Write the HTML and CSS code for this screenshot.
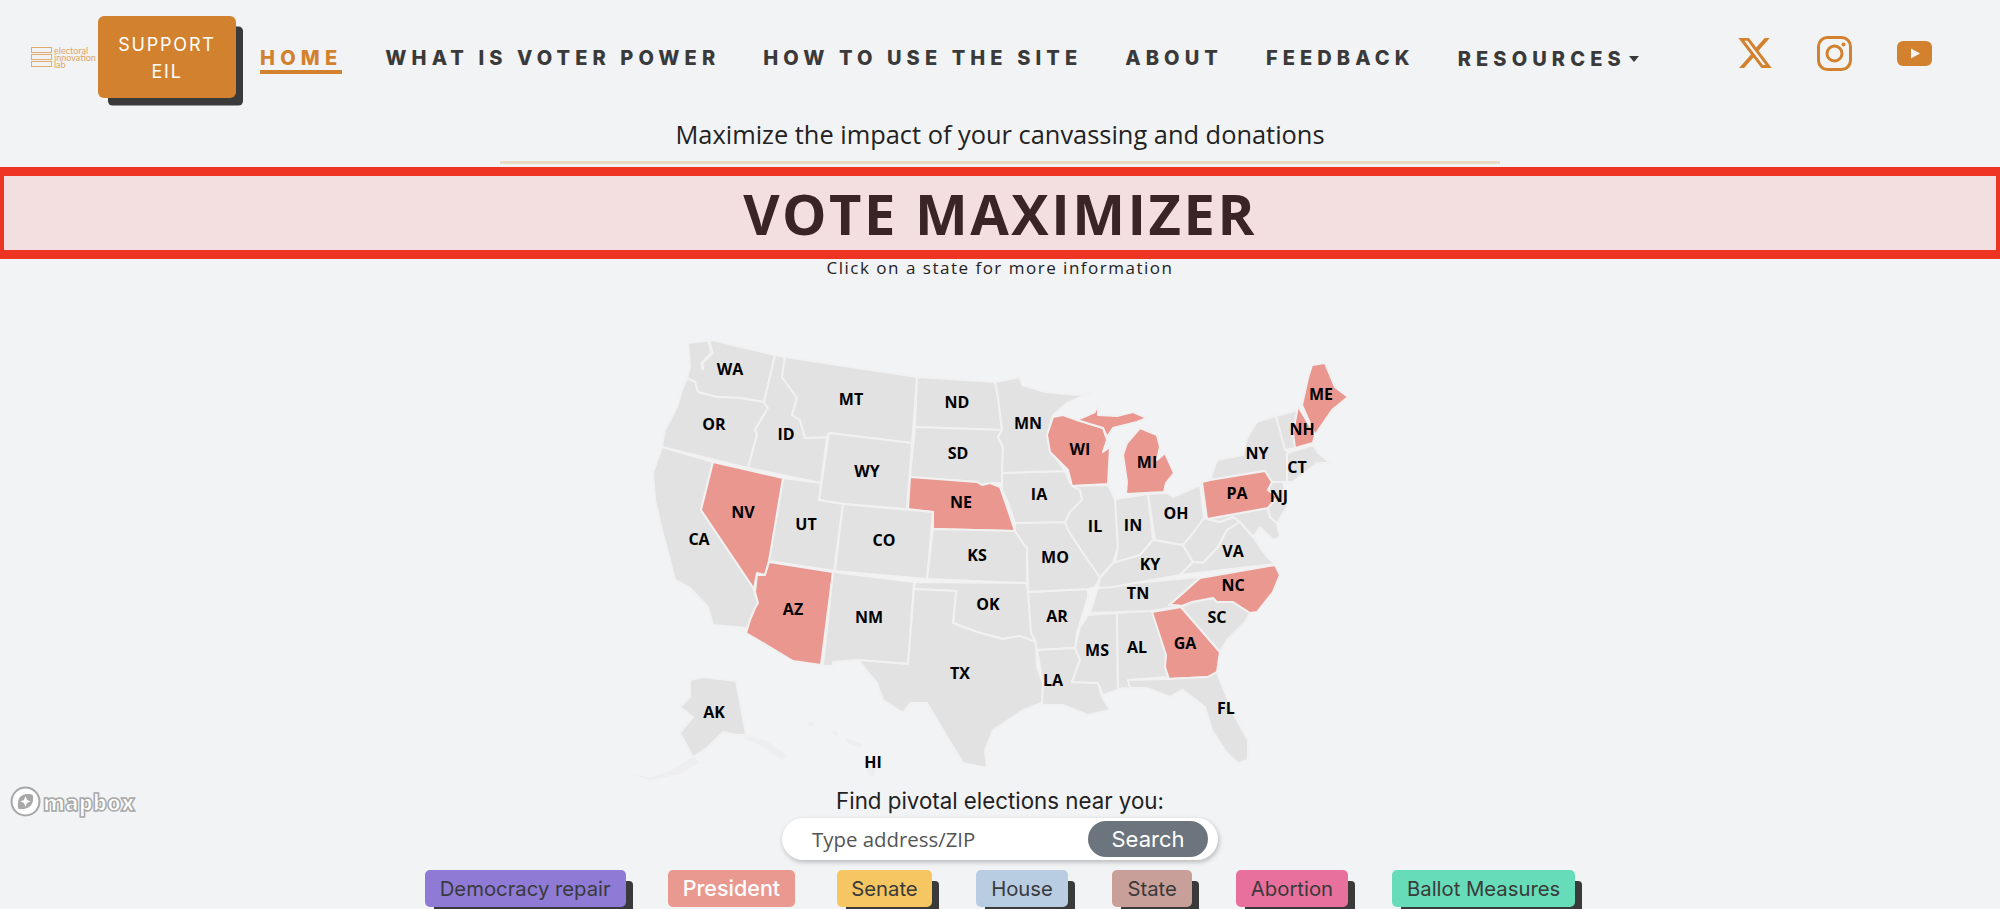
FILE: index.html
```html
<!DOCTYPE html>
<html lang="en">
  <head>
    <meta charset="UTF-8" />
    <meta name="viewport" content="width=device-width, initial-scale=1.0" />
    <title>Vote Maximizer</title>
    <link rel="stylesheet" href="styles.css">
  </head>
  <body>
    <header class="topbar">
      <a class="logo" href="#">
        <svg class="logo-bars" viewBox="0 0 21 20">
          <rect x="0.5" y="0.5" width="20" height="5" />
          <rect x="0.5" y="7.5" width="20" height="5" />
          <rect x="0.5" y="14.5" width="20" height="5" />
        </svg>
        <span class="logo-text">electoral<br>innovation<br>lab</span>
      </a>
      <a class="support" href="#">SUPPORT<br>EIL</a>
      <nav class="mainnav">
        <a class="active" href="#">HOME</a>
        <a href="#">WHAT IS VOTER POWER</a>
        <a href="#">HOW TO USE THE SITE</a>
        <a href="#">ABOUT</a>
        <a href="#">FEEDBACK</a>
        <a class="dropdown" href="#">RESOURCES<span class="caret"></span></a>
      </nav>
      <div class="social">
        <svg class="icon-x" viewBox="1 2 22 20"><path d="M18.244 2.25h3.308l-7.227 8.26 8.502 11.24H16.17l-5.214-6.817L4.99 21.75H1.68l7.73-8.835L1.254 2.25H8.08l4.713 6.231zm-1.161 17.52h1.833L7.084 4.126H5.117z" /></svg>
        <svg class="icon-ig" viewBox="0 0 35 35">
          <rect x="1.5" y="1.5" width="32" height="32" rx="9" />
          <circle cx="17.5" cy="17.5" r="7.5" />
          <circle class="dot" cx="26.5" cy="8.5" r="2" />
        </svg>
        <svg class="icon-yt" viewBox="0 0 35 25">
          <rect width="35" height="25" rx="6" />
          <path d="M14 7.5l9 5-9 5z" />
        </svg>
      </div>
    </header>

    <p class="tagline">Maximize the impact of your canvassing and donations</p>
    <hr class="rule">
    <h1 class="banner">VOTE MAXIMIZER</h1>
    <p class="hint">Click on a state for more information</p>

    <main class="mapwrap">
      <svg class="usmap" viewBox="600 320 800 465">
        <g class="faint">
          <polygon points="693,757 672,770 650,778 625,772 650,780 680,774 700,762" />
          <polygon points="746,735 765,740 787,755 782,760 760,745 742,738" />
          <polygon points="808,722 814,721 815,726 809,726" />
          <polygon points="832,731 838,733 836,737" />
          <polygon points="845,737 862,744 860,748 848,743" />
          <polygon points="866,768 876,766 874,776 868,775" />
        </g>
        <polygon class="st" points="688,343 712,340 775,355 764,402 740,398 717,397 698,392 695,382 687,378 690,367" />
        <polygon class="st" points="687,378 695,382 698,392 717,397 740,398 764,402 768,408 755,430 757,435 748,468 662,447 665,430 677,407 683,387" />
        <polygon class="st" points="775,355 785,357 782,377 797,398 792,415 800,420 805,438 827,437 821,483 748,468 757,435 755,430 768,408 764,402" />
        <polygon class="st" points="785,357 917,377 912,443 829,433 827,437 805,438 800,420 792,415 797,398 782,377" />
        <polygon class="st" points="829,433 912,443 907,509 843,504 819,500" />
        <polygon class="st" points="917,377 995,382 998,397 1002,430 915,427" />
        <polygon class="st" points="915,427 1002,430 998,437 1003,447 1002,483 990,483 982,485 977,482 910,477" />
        <polygon class="st hot" points="910,477 977,482 982,485 990,483 1000,487 1007,507 1015,531 933,529 933,512 908,509" />
        <polygon class="st" points="783,478 821,483 819,500 843,504 834,571 769,561" />
        <polygon class="st" points="843,504 933,512 927,579 835,571" />
        <polygon class="st" points="933,529 1015,531 1023,543 1027,548 1027,583 927,579" />
        <polygon class="st" points="662,447 713,462 701,510 754,589 755,595 759,605 747,628 713,625 708,607 690,588 675,580 670,560 662,530 655,500 653,473" />
        <polygon class="st hot" points="713,462 783,478 769,561 765,575 757,573 754,589 701,510" />
        <polygon class="st hot" points="769,562 833,572 821,665 793,661 746,633 750,620 755,608 758,603 755,592 757,575 765,575" />
        <polygon class="st" points="833,572 914,582 908,664 858,660 833,662 833,666 823,666" />
        <polygon class="st" points="915,582 1026,583 1030,592 1031,633 1036,642 1020,636 1003,639 977,632 953,623 956,591 914,589" />
        <polygon class="st" points="914,589 956,591 953,623 977,632 1003,639 1020,636 1036,642 1037,667 1043,683 1042,703 1023,710 993,730 985,750 987,768 963,763 943,730 927,703 910,703 903,713 883,700 877,683 858,660 908,664" />
        <polygon class="st" points="1028,592 1088,589 1088,597 1077,633 1075,648 1037,650 1035,640 1031,633" />
        <polygon class="st" points="1037,650 1075,648 1080,660 1072,682 1098,683 1102,697 1110,710 1088,715 1063,705 1042,705 1043,683" />
        <polygon class="st" points="1088,615 1117,613 1118,690 1103,695 1098,683 1072,682 1080,660 1075,648 1080,627" />
        <polygon class="st" points="1117,613 1152,610 1167,657 1165,667 1168,677 1128,680 1132,689 1123,688 1118,690" />
        <polygon class="st hot" points="1152,612 1181,607 1220,652 1217,672 1208,677 1169,679 1165,667 1166,655" />
        <polygon class="st" points="1181,607 1192,602 1213,598 1217,602 1233,602 1250,613 1245,622 1227,640 1220,652" />
        <polygon class="st" points="1128,680 1168,679 1208,677 1217,672 1218,675 1233,713 1248,740 1248,760 1238,763 1227,753 1212,730 1205,707 1183,690 1170,697 1147,688 1130,688" />
        <polygon class="st hot" points="1275,565 1280,575 1273,592 1257,612 1250,613 1233,602 1217,602 1213,598 1192,602 1182,606 1169,605 1183,593 1200,578" />
        <polygon class="st" points="1098,587 1113,585 1200,577 1183,593 1169,605 1182,606 1152,611 1090,613 1095,597" />
        <polygon class="st" points="1015,523 1065,522 1068,530 1083,553 1097,573 1100,578 1095,587 1088,589 1028,592 1027,548 1023,543 1015,531" />
        <polygon class="st" points="1002,473 1065,471 1070,483 1080,490 1082,500 1070,512 1065,522 1015,523 1007,500 1002,490" />
        <polygon class="st" points="995,382 1020,377 1022,385 1045,392 1080,395 1093,392 1067,403 1053,415 1047,435 1050,450 1065,471 1002,473 1003,447 998,437 1002,430 998,397" />
        <polygon class="st hot" points="1053,417 1063,415 1077,420 1103,428 1107,440 1103,452 1110,447 1108,484 1072,486 1068,470 1050,452 1047,435" />
        <polygon class="st hot" points="1077,420 1095,412 1098,403 1098,415 1117,416 1133,412 1147,418 1137,422 1113,428 1107,437 1103,428" />
        <polygon class="st hot" points="1140,428 1157,435 1160,447 1157,460 1165,453 1174,473 1166,483 1164,492 1126,494 1127,482 1123,455 1127,443" />
        <polygon class="st" points="1072,486 1108,485 1115,499 1118,547 1113,563 1100,577 1097,573 1083,553 1068,530 1065,522 1070,512 1082,500 1080,490" />
        <polygon class="st" points="1115,499 1148,494 1153,540 1140,555 1115,563 1118,547" />
        <polygon class="st" points="1148,494 1167,493 1173,497 1200,485 1204,518 1190,537 1183,545 1170,543 1155,540" />
        <polygon class="st" points="1153,540 1170,543 1183,545 1193,562 1180,575 1113,587 1098,588 1100,578 1113,563 1140,555" />
        <polygon class="st" points="1204,518 1220,522 1233,517 1240,522 1227,530 1218,547 1203,563 1193,562 1183,545 1190,537" />
        <polygon class="st" points="1193,562 1203,563 1218,547 1227,530 1240,522 1253,537 1267,557 1275,564 1180,575" />
        <polygon class="st" points="1207,519 1268,508 1270,517 1277,523 1280,537 1273,540 1260,527 1253,537 1240,522 1233,517 1220,522" />
        <polygon class="st" points="1272,482 1283,480 1287,507 1277,523 1270,517 1268,508 1277,497 1268,490" />
        <polygon class="st" points="1210,480 1217,460 1243,455 1247,438 1257,422 1276,416 1287,450 1287,482 1272,482 1265,471" />
        <polygon class="st hot" points="1202,482 1210,480 1265,471 1272,482 1268,490 1277,497 1268,508 1207,519" />
        <polygon class="st" points="1276,416 1298,410 1295,448 1285,450" />
        <polygon class="st hot" points="1298,406 1315,435 1313,443 1295,448 1293,433" />
        <polygon class="st hot" points="1312,365 1325,363 1335,387 1348,397 1332,410 1315,435 1302,405 1308,378" />
        <polygon class="st" points="1287,453 1313,445 1318,453 1330,463 1317,463 1293,482 1287,482" />
        <polygon class="st" points="690,680 703,677 736,681 746,735 737,735 723,732 708,747 693,757 680,733 693,717 680,707 690,697" />
        <polyline class="sound" points="708,338 712,353 702,363 703,370" />

        <text x="730" y="369">WA</text>
        <text x="714" y="424">OR</text>
        <text x="786" y="434">ID</text>
        <text x="851" y="399">MT</text>
        <text x="957" y="402">ND</text>
        <text x="1028" y="423">MN</text>
        <text x="958" y="453">SD</text>
        <text x="867" y="471">WY</text>
        <text x="743" y="512">NV</text>
        <text x="806" y="524">UT</text>
        <text x="884" y="540">CO</text>
        <text x="961" y="502">NE</text>
        <text x="977" y="555">KS</text>
        <text x="699" y="539">CA</text>
        <text x="793" y="609">AZ</text>
        <text x="869" y="617">NM</text>
        <text x="988" y="604">OK</text>
        <text x="960" y="673">TX</text>
        <text x="1057" y="616">AR</text>
        <text x="1053" y="680">LA</text>
        <text x="1097" y="650">MS</text>
        <text x="1137" y="647">AL</text>
        <text x="1185" y="643">GA</text>
        <text x="1217" y="617">SC</text>
        <text x="1226" y="708">FL</text>
        <text x="1233" y="585">NC</text>
        <text x="1138" y="593">TN</text>
        <text x="1150" y="564">KY</text>
        <text x="1233" y="551">VA</text>
        <text x="1176" y="513">OH</text>
        <text x="1133" y="525">IN</text>
        <text x="1095" y="526">IL</text>
        <text x="1055" y="557">MO</text>
        <text x="1039" y="494">IA</text>
        <text x="1080" y="449">WI</text>
        <text x="1147" y="462">MI</text>
        <text x="1237" y="493">PA</text>
        <text x="1279" y="496">NJ</text>
        <text x="1257" y="453">NY</text>
        <text x="1297" y="467">CT</text>
        <text x="1302" y="429">NH</text>
        <text x="1321" y="394">ME</text>
        <text x="714" y="712">AK</text>
        <text x="873" y="762">HI</text>
      </svg>

      <div class="mapbox">
        <svg class="mapbox-mark" viewBox="0 0 30 30">
          <circle cx="15" cy="15" r="13.5" />
          <path d="M8 22c-1-6 0-11 4-13 4-2 9-1 10 0 1 4 0 8-2 10-3 3-8 4-12 3z" />
          <path class="spark" d="M15 10l1.5 3.500 3.500 1.500-3.500 1.500-1.500 3.500-1.500-3.500-3.500-1.500 3.500-1.500z" />
        </svg>
        <span class="mapbox-name">mapbox</span>
      </div>
    </main>

    <p class="find">Find pivotal elections near you:</p>
    <form class="searchbar">
      <span class="placeholder">Type address/ZIP</span>
      <button class="searchbtn" type="button">Search</button>
    </form>

    <div class="legend">
      <span class="pill repair">Democracy repair</span>
      <span class="pill president">President</span>
      <span class="pill senate">Senate</span>
      <span class="pill house">House</span>
      <span class="pill state">State</span>
      <span class="pill abortion">Abortion</span>
      <span class="pill ballot">Ballot Measures</span>
    </div>
  </body>
</html>
```

FILE: styles.css
```css
html,
body {
  height: 909px;
  overflow: hidden;
}

body {
  margin: 0;
  background-color: #f2f3f5;
  color: #222;
  font-family: "Inter", sans-serif;
}

a {
  color: inherit;
  text-decoration: none;
}

p,
h1 {
  margin: 0;
}

/* top bar */
.topbar {
  display: flex;
  align-items: center;
  height: 114px;
  padding-left: 31px;
  box-sizing: border-box;
}

.logo {
  display: flex;
  align-items: center;
  gap: 2px;
  width: 67px;
}

.logo-bars {
  width: 21px;
  height: 20px;
  flex: none;
}

.logo-bars rect {
  fill: none;
  stroke: #e3aa6e;
}

.logo-text {
  color: #e0a566;
  font-family: "Lato", sans-serif;
  font-size: 9px;
  line-height: 7px;
}

.support {
  width: 138px;
  height: 82px;
  padding-top: 2px;
  box-sizing: border-box;
  display: flex;
  align-items: center;
  justify-content: center;
  text-align: center;
  background-color: #d2822e;
  border-radius: 6px;
  box-shadow: 8.5px 9px 0 -1.5px #3a3a3a;
  color: #fff;
  font-size: 18px;
  line-height: 27px;
  letter-spacing: 1.8px;
}

.mainnav {
  display: flex;
  align-items: flex-start;
  gap: 43px;
  margin-left: 24px;
  margin-top: 5px;
  color: #3a3a3a;
  font-family: "Inter", sans-serif;
  font-size: 20px;
  font-weight: 800;
  line-height: 24px;
  letter-spacing: 5.1px;
}

.active {
  color: #d2822e;
  border-bottom: 4px solid #d2822e;
  letter-spacing: 5.2px;
}

.dropdown {
  display: flex;
  align-items: center;
  margin-top: 1px;
}

.caret {
  margin-left: 3px;
  border-top: 6px solid #3a3a3a;
  border-left: 5px solid transparent;
  border-right: 5px solid transparent;
}

.social {
  display: flex;
  align-items: center;
  gap: 45px;
  margin-left: 99px;
  margin-top: -8px;
}

.icon-x {
  width: 34px;
  height: 32px;
  fill: #d2822e;
}

.icon-ig {
  width: 35px;
  height: 35px;
  fill: none;
  stroke: #d2822e;
  stroke-width: 3;
}

.icon-ig .dot {
  fill: #d2822e;
  stroke: none;
}

.icon-yt {
  width: 35px;
  height: 25px;
  fill: #d2822e;
}

.icon-yt path {
  fill: #f2f3f5;
}

/* headings */
.tagline {
  text-align: center;
  color: #222;
  font-family: "Open Sans", sans-serif;
  font-size: 25.4px;
  line-height: 40px;
}

.rule {
  width: 1000px;
  height: 3px;
  margin: 7px auto 3px;
  border: 0;
  background-color: #e8d9c5;
}

.banner {
  height: 92px;
  box-sizing: border-box;
  border: solid #ee3524;
  border-width: 9px 4px;
  background-color: #f3dfe0;
  color: #3a2426;
  text-align: center;
  font-family: "Open Sans", sans-serif;
  font-size: 56px;
  font-weight: 700;
  line-height: 74px;
  letter-spacing: 2.5px;
}

.hint {
  text-align: center;
  color: #222;
  font-family: "Open Sans", sans-serif;
  font-size: 17px;
  line-height: 18px;
  letter-spacing: 1.5px;
}

/* map */
.mapwrap {
  position: relative;
  padding-top: 43px;
  height: 465px;
}

.usmap {
  display: block;
  width: 800px;
  height: 465px;
  margin: 0 auto;
}

.st {
  fill: #e2e2e2;
  stroke: #f1f1f2;
  stroke-width: 2;
  stroke-linejoin: round;
}

.hot {
  fill: #ea9790;
}

.sound {
  fill: none;
  stroke: #f1f1f2;
  stroke-width: 3;
}

.faint polygon {
  fill: #eeeeef;
}

.usmap text {
  fill: #000;
  font-family: "Open Sans", sans-serif;
  font-size: 16px;
  font-weight: 700;
  text-anchor: middle;
  dominant-baseline: central;
}

.mapbox {
  position: absolute;
  left: 10px;
  top: 509px;
  display: flex;
  align-items: center;
  gap: 2px;
}

.mapbox-mark {
  width: 31px;
  height: 31px;
  fill: #fff;
  stroke: #a8a8a8;
  stroke-width: 2;
}

.mapbox-mark path {
  fill: #a8a8a8;
  stroke: none;
}

.mapbox-mark .spark {
  fill: #fff;
}

.mapbox-name {
  color: #fff;
  font-family: "Open Sans", sans-serif;
  font-size: 22px;
  font-weight: 800;
  line-height: 28px;
  -webkit-text-stroke: 1.5px #a8a8a8;
}

/* search */
.find {
  margin-top: 3px;
  text-align: center;
  color: #222;
  font-size: 22.3px;
  line-height: 26px;
}

.searchbar {
  display: flex;
  align-items: center;
  justify-content: space-between;
  width: 436px;
  height: 42px;
  margin: 4px auto 0;
  padding: 0 10px 0 30px;
  box-sizing: border-box;
  background-color: #fff;
  border-radius: 21px;
  box-shadow: 1px 2px 5px rgba(0, 0, 0, 0.25);
}

.placeholder {
  color: #555;
  font-family: "Open Sans", sans-serif;
  font-size: 20.4px;
}

.searchbtn {
  width: 120px;
  height: 36px;
  padding: 0;
  border: 0;
  border-radius: 18px;
  background-color: #6c757d;
  color: #fff;
  font-family: "Inter", sans-serif;
  font-size: 22px;
}

/* legend */
.legend {
  display: flex;
  justify-content: center;
  gap: 44px;
  margin-top: 10px;
}

.pill {
  height: 37px;
  padding: 0 15px;
  border-radius: 5px;
  box-shadow: 8px 10px 0 -1px #3a3a3a;
  color: #3a3a3a;
  font-size: 20.3px;
  line-height: 37px;
}

.repair { background-color: #8f7ad6; }
.president { background-color: #ea9991; color: #fff; box-shadow: none; font-size: 21.5px; font-weight: 500; margin: 0 -2px 0 -2px; }
.senate { background-color: #f5c662; padding: 0 14px; }
.house { background-color: #b8cce2; padding: 0 15.5px; }
.state { background-color: #c99f99; }
.abortion { background-color: #e8709d; }
.ballot { background-color: #66dcb8; }
```
